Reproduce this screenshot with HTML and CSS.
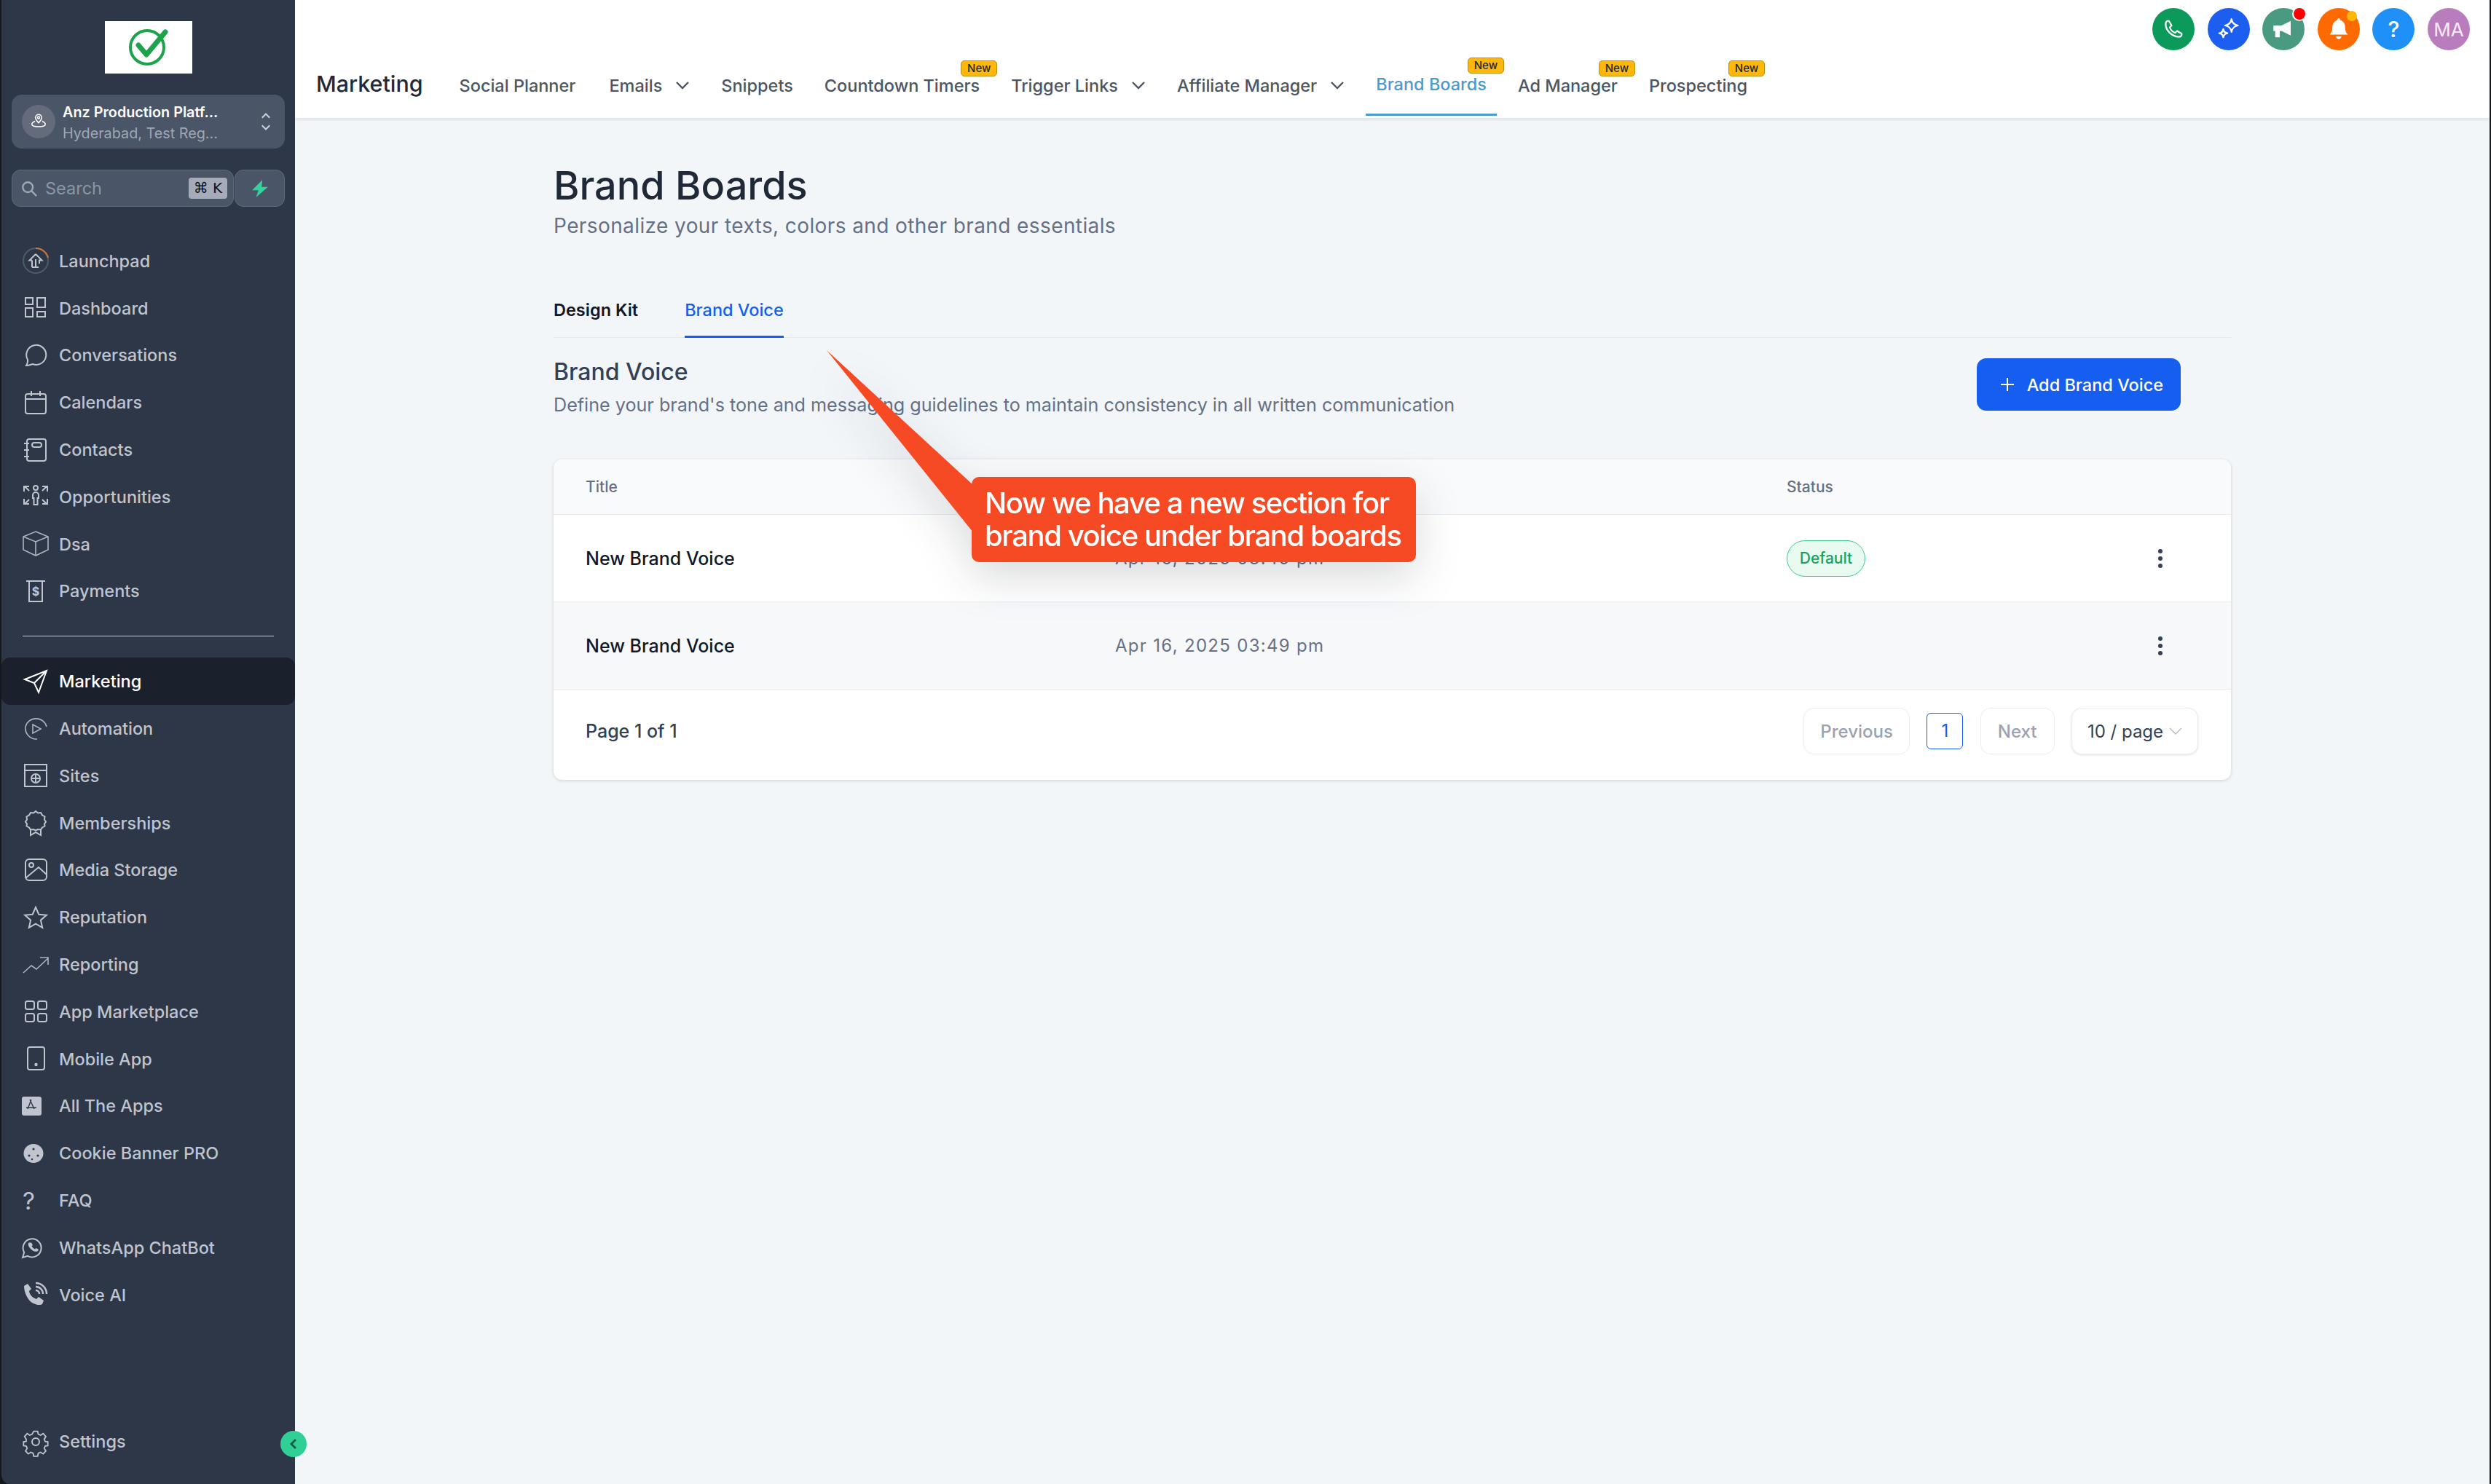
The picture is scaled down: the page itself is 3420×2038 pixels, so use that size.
FILE: index.html
```html
<!DOCTYPE html>
<html lang="en">
<head>
<meta charset="utf-8">
<title>Brand Boards</title>
<link rel="stylesheet" href="styles.css">
</head>
<body>
<aside class="sidebar">
  <div class="logo">
    <svg viewBox="0 0 120 72" class="logo-svg"><circle cx="58" cy="36" r="23" class="logo-ring"/><path d="M46 33l11 13 26-31" class="logo-check"/></svg>
  </div>
  <div class="switcher">
    <span class="sw-avatar"><svg viewBox="0 0 24 24" class="sw-pin"><path d="M12 13.500c-2.800-2.800-4-4.600-4-6.500a4 4 0 0 1 8 0c0 1.900-1.200 3.700-4 6.500z"/><circle cx="12" cy="7" r="1.400"/><path d="M7.500 11.500C5 12.500 3.500 14 3.500 15.500c0 2 3.500 3 8.500 3s8.500-1 8.500-3c0-1.500-1.500-3-4-4"/></svg></span>
    <span class="sw-text"><span class="sw-name">Anz Production Platf...</span><span class="sw-sub">Hyderabad, Test Reg...</span></span>
    <svg viewBox="0 0 16 32" class="sw-chev"><path d="M2 10l6-6 6 6M2 22l6 6 6-6"/></svg>
  </div>
  <div class="search-row">
    <div class="search">
      <svg viewBox="0 0 24 24" class="search-ico"><circle cx="10" cy="10" r="7.500"/><path d="M15.500 15.500L23 23"/></svg>
      <span class="search-text">Search</span>
      <span class="kbd">⌘ K</span>
    </div>
    <div class="flash"><svg viewBox="0 0 24 24" class="flash-ico"><path d="M15 1L2 14h8l-3 9 15-13h-8l1-9z"/></svg></div>
  </div>
  <nav class="menu menu-top">
    <a class="item"><svg viewBox="0 0 32 32" class="ni"><circle cx="16" cy="16" r="17" class="ring"/><path d="M16-1A17 17 0 0 1 33 12" class="ring-arc"/><path d="M16 7l8.500 8.500H21V20M16 7l-8.500 8.500H11M11 15.500V25M11 25h5M16 14v11M16 25h4"/></svg><span>Launchpad</span></a>
    <a class="item"><svg viewBox="0 0 32 32" class="ni"><rect x="2" y="2" width="10" height="9"/><rect x="2" y="16" width="10" height="12"/><rect x="18" y="2" width="11" height="13"/><rect x="18" y="21" width="11" height="7"/></svg><span>Dashboard</span></a>
    <a class="item"><svg viewBox="0 0 32 32" class="ni"><path d="M3 30c1.500-2.500 2.500-5 2-8A13.500 13.500 0 1 1 12 28c-2.500.5-5 2-9 2z"/></svg><span>Conversations</span></a>
    <a class="item"><svg viewBox="0 0 32 32" class="ni"><rect x="2" y="4" width="28" height="27" rx="3"/><path d="M2 11h28M10 0v7M22 0v7"/></svg><span>Calendars</span></a>
    <a class="item"><svg viewBox="0 0 32 32" class="ni"><rect x="4" y="1" width="26" height="30" rx="3"/><rect x="11" y="6" width="13" height="6" rx="3"/><path d="M0 7h7M0 16h7M0 25h7"/></svg><span>Contacts</span></a>
    <a class="item"><svg viewBox="0 0 32 32" class="ni"><circle cx="16" cy="4" r="3"/><path d="M12 14a4 4 0 0 1 8 0v4h-1.500v9h-5v-9H12zM0 9V2h7M1 2l6 6M32 9V2h-7M31 2l-6 6M0 19v7h7M1 26l6-6M32 19v7h-7M31 26l-6-6"/></svg><span>Opportunities</span></a>
    <a class="item"><svg viewBox="0 0 32 32" class="ni ni-thin"><path d="M16-1l17 7v18l-17 8-17-8V6zM-1 6l17 7 17-7M16 13v19"/></svg><span>Dsa</span></a>
    <a class="item"><svg viewBox="0 0 32 32" class="ni"><path d="M3 2h26M7 2v28h18V2"/><text x="16" y="22" class="dollar">$</text></svg><span>Payments</span></a>
  </nav>
  <hr class="divider">
  <nav class="menu">
    <a class="item active"><svg viewBox="0 0 32 32" class="ni"><path d="M1 13L31 1 20 31 14 18zM14 18L31 1"/></svg><span>Marketing</span></a>
    <a class="item"><svg viewBox="0 0 32 32" class="ni ni-thin"><path d="M31 13A15 15 0 0 0 2 13a15 15 0 0 0 16 17"/><path d="M12 10l11 6-11 6z"/></svg><span>Automation</span></a>
    <a class="item"><svg viewBox="0 0 32 32" class="ni"><rect x="1" y="1" width="30" height="30"/><path d="M1 9h30M10 20h12M16 14v12"/><circle cx="16" cy="20" r="6"/></svg><span>Sites</span></a>
    <a class="item"><svg viewBox="0 0 32 32" class="ni"><path d="M16 0l3 2.500 4-.5 2 3.500 3.500 2-.5 4 2 3-2 3 .5 3-3.500 2-2 3-4-.5-3 1.500-3-1.500-4 .5-2-3-3.500-2 .5-3-2-3 2-3-.5-4 3.500-2 2-3.500 4 .5z"/><path d="M9 24v9l7-4 7 4v-9"/></svg><span>Memberships</span></a>
    <a class="item"><svg viewBox="0 0 32 32" class="ni"><rect x="2" y="1" width="29" height="29" rx="5"/><circle cx="10" cy="9" r="3"/><path d="M2 27l18-15 11 10"/></svg><span>Media Storage</span></a>
    <a class="item"><svg viewBox="0 0 32 32" class="ni"><path d="M16 2l4.300 9.700 10.500 1-7.900 7 2.300 10.300L16 24.600 6.800 30l2.300-10.300-7.900-7 10.500-1z"/></svg><span>Reputation</span></a>
    <a class="item"><svg viewBox="0 0 32 32" class="ni ni-thin"><path d="M-1 27L10 17l7 5 16-15M22 6h11v10"/></svg><span>Reporting</span></a>
    <a class="item"><svg viewBox="0 0 32 32" class="ni"><rect x="2" y="2" width="12" height="11" rx="2.500"/><rect x="19" y="2" width="12" height="11" rx="2.500"/><rect x="2" y="19" width="12" height="11" rx="2.500"/><rect x="19" y="19" width="12" height="11" rx="2.500"/></svg><span>App Marketplace</span></a>
    <a class="item"><svg viewBox="0 0 32 32" class="ni"><rect x="5" y="0" width="23" height="31" rx="3"/><circle cx="16.500" cy="24" r="1.200"/></svg><span>Mobile App</span></a>
    <a class="item"><svg viewBox="0 0 32 32" class="ni"><rect x="-3" y="3" width="27" height="26" rx="3" class="solid"/><path d="M10 7l-5 13M8 7l6 13M3 18h14" class="cut"/></svg><span>All The Apps</span></a>
    <a class="item"><svg viewBox="0 0 32 32" class="ni"><ellipse cx="13" cy="16" rx="13.500" ry="13" class="solid"/><circle cx="13" cy="10" r="1.600" class="dot"/><circle cx="7" cy="19" r="1.600" class="dot"/><circle cx="19" cy="19" r="1.600" class="dot"/><circle cx="11" cy="24" r="1.200" class="dot"/></svg><span>Cookie Banner PRO</span></a>
    <a class="item"><span class="faq">?</span><span>FAQ</span></a>
    <a class="item"><svg viewBox="0 0 32 32" class="ni"><path d="M-2 30l2.200-7A12.500 12.500 0 1 1 5 27.800z"/><path d="M6 10c-1 3 1 6 3.500 8.500S15 22.500 18 21.500c1-.3 1.800-1.300 2-2.500l-3.500-2-1.500 1.500c-2-.8-3.500-2.500-4.500-4.500L12 13l-2-3.500c-1.500 0-3.500 0-4 .5z" class="solid"/></svg><span>WhatsApp ChatBot</span></a>
    <a class="item"><svg viewBox="0 0 32 32" class="ni"><path d="M0 4l5-3 5 7-3 3c.5 5 5 9.500 10 11l3-3 7 5-2 5c-3 2-8 1-12-1C6 25 0 14 0 4z" class="solid"/><path d="M16 10a5 5 0 0 1 5 5M16 5a10 10 0 0 1 10 10M16 0a15 15 0 0 1 15 15" class="signal"/></svg><span>Voice AI</span></a>
  </nav>
  <a class="item settings"><svg viewBox="0 0 32 32" class="ni"><circle cx="16" cy="16" r="5"/><path d="M13 0h6l1 4.500 3.500 1.500 4-2.500 4 4.500-2.500 4 1.500 3.500 4 .5v6l-4 .5-1.500 3.500 2.500 4-4 4.500-4-2.500-3.500 1.500-1 4.500h-6l-1-4.500-3.500-1.500-4 2.500-4-4.500 2.500-4-1.500-3.500-4-.5v-6l4-.5L1.500 12-1 8l4-4.500 4 2.500L10.500 4.500z" class="gear"/></svg><span>Settings</span></a>
  <button class="collapse"><svg viewBox="0 0 16 24" class="collapse-ico"><path d="M12 4l-8 8 8 8"/></svg></button>
</aside>

<main class="main">
  <header class="topbar">
    <div class="top-actions">
      <span class="circle c-phone"><svg viewBox="0 0 24 24" class="ci"><path d="M7 3l3 5-2 2c1 3 3 5 6 6l2-2 5 3c.5 2-1 3.500-3 3.500C10 20 3 13 3.500 6 3.500 4 5 2.500 7 3z"/></svg></span>
      <span class="circle c-spark"><svg viewBox="0 0 24 24" class="ci"><path d="M15 1c.5 4 2.500 6 7 7-4.500 1-6.500 3-7 7-.5-4-2.500-6-7-7 4.500-1 6.500-3 7-7zM6 12c.3 2.500 1.500 4 4.500 4.500C7.500 17 6.300 18.500 6 21c-.3-2.500-1.500-4-4.500-4.500C4.500 16 5.700 14.500 6 12z"/></svg></span>
      <span class="circle c-mega"><svg viewBox="0 0 24 24" class="ci-fill"><path d="M1 8h9l10-5v16l-10-5H8v7H3v-7H1z"/></svg><i class="dot-red"></i></span>
      <span class="circle c-bell"><svg viewBox="0 0 24 24" class="ci-fill"><path d="M12 0c1 0 1.500.7 1.500 2C17 3 19 6 19 10c0 4 1 6 3 8H2c2-2 3-4 3-8 0-4 2-7 5.500-8C10.500.7 11 0 12 0zM9 20h6c-.5 2-1.500 3-3 3s-2.500-1-3-3z"/></svg><i class="dot-amber"></i></span>
      <span class="circle c-help">?</span>
      <span class="circle c-user">MA</span>
    </div>
    <div class="navrow">
      <h2 class="app-title">Marketing</h2>
      <nav class="tabs-top">
        <a class="t t-first">Social Planner</a>
        <a class="t">Emails<svg viewBox="0 0 20 12" class="caret"><path d="M2 2l8 8 8-8"/></svg></a>
        <a class="t">Snippets</a>
        <a class="t">Countdown Timers<b class="new">New</b></a>
        <a class="t">Trigger Links<svg viewBox="0 0 20 12" class="caret"><path d="M2 2l8 8 8-8"/></svg></a>
        <a class="t">Affiliate Manager<svg viewBox="0 0 20 12" class="caret"><path d="M2 2l8 8 8-8"/></svg></a>
        <a class="t t-on">Brand Boards<b class="new">New</b></a>
        <a class="t">Ad Manager<b class="new">New</b></a>
        <a class="t">Prospecting<b class="new">New</b></a>
      </nav>
    </div>
  </header>

  <section class="page">
    <h1 class="title">Brand Boards</h1>
    <p class="subtitle">Personalize your texts, colors and other brand essentials</p>
    <div class="subtabs">
      <a class="st st-dark">Design Kit</a>
      <a class="st st-on">Brand Voice</a>
    </div>
    <div class="section-head">
      <div>
        <h3 class="section-title">Brand Voice</h3>
        <p class="section-desc">Define your brand's tone and messaging guidelines to maintain consistency in all written communication</p>
      </div>
      <button class="add"><svg viewBox="0 0 20 20" class="plus"><path d="M10 1v18M1 10h18"/></svg>Add Brand Voice</button>
    </div>
    <div class="card">
      <div class="row head"><span class="c1">Title</span><span class="c2"></span><span class="c3">Status</span></div>
      <div class="row">
        <span class="c1 name">New Brand Voice</span><span class="c2 date">Apr 16, 2025 03:49 pm</span>
        <span class="c3"><span class="pill">Default</span></span>
        <span class="more"><i></i><i></i><i></i></span>
      </div>
      <div class="row row-alt">
        <span class="c1 name">New Brand Voice</span><span class="c2 date">Apr 16, 2025 03:49 pm</span>
        <span class="c3"></span>
        <span class="more"><i></i><i></i><i></i></span>
      </div>
      <div class="foot">
        <span class="pageof">Page 1 of 1</span>
        <div class="pager">
          <span class="pg pg-prev">Previous</span>
          <span class="pg-num">1</span>
          <span class="pg pg-next">Next</span>
          <span class="pg pg-size">10 / page<svg viewBox="0 0 18 10" class="size-caret"><path d="M1 1l8 8 8-8"/></svg></span>
        </div>
      </div>
    </div>
  </section>

  <div class="callout">
    <svg viewBox="0 0 210 300" class="callout-tail"><path d="M0 0L201 185V250z"/></svg>
    <div class="callout-box">Now we have a new section for<br>brand voice under brand boards</div>
  </div>
</main>
</body>
</html>
```
FILE: styles.css
```css
* { box-sizing: border-box; }
html, body { margin: 0; height: 100%; }
body {
  display: flex;
  width: 3420px;
  height: 2038px;
  overflow: hidden;
  background: #14171c;
  font-family: Inter, "Liberation Sans", sans-serif;
  color: #101828;
}
h1, h2, h3, p { margin: 0; }

/* sidebar */
.sidebar {
  position: relative;
  flex: 0 0 403px;
  margin-left: 2px;
  display: flex;
  flex-direction: column;
  background: #2d3748;
  border-bottom-left-radius: 12px;
  z-index: 2;
}
.logo {
  width: 120px;
  height: 72px;
  margin: 29px auto 0;
  background: #fff;
}
.logo-svg { display: block; width: 120px; height: 72px; fill: none; stroke: #1ea34c; }
.logo-ring { stroke-width: 4; }
.logo-check { stroke-width: 7; stroke-linecap: round; stroke-linejoin: round; }

.switcher {
  display: flex;
  align-items: center;
  height: 74px;
  margin: 29px 14px 0 14px;
  padding: 0 19px 0 14px;
  border-radius: 14px;
  background: #4a5568;
}
.sw-avatar {
  flex: 0 0 46px;
  height: 46px;
  border-radius: 50%;
  background: #646c7c;
  display: flex;
  align-items: center;
  justify-content: center;
}
.sw-pin { width: 26px; height: 26px; fill: none; stroke: #fff; stroke-width: 1.400; }
.sw-text { flex: 1; display: flex; flex-direction: column; margin-left: 10px; padding-top: 4px; }
.sw-name { font-size: 19.800px; line-height: 29px; font-weight: 600; color: #fff; }
.sw-sub { font-size: 19.800px; line-height: 29px; color: #a0a7b4; }
.sw-chev { width: 14px; height: 28px; fill: none; stroke: #cbd0d9; stroke-width: 2.400; }

.search-row { display: flex; margin: 29px 14px 0 14px; height: 51px; gap: 1px; }
.search {
  flex: 1;
  display: flex;
  align-items: center;
  padding: 0 8px 0 12px;
  border: 1px solid #5f6979;
  border-radius: 12px;
  background: #4a5568;
}
.search-ico { width: 22px; height: 22px; fill: none; stroke: #a0a7b4; stroke-width: 2.600; }
.search-text { flex: 1; margin-left: 11px; font-size: 23.500px; color: #8d95a4; }
.kbd {
  width: 53px;
  height: 29px;
  border-radius: 4px;
  background: #a5abb9;
  color: #0c111d;
  font-size: 20px;
  line-height: 29px;
  text-align: center;
  white-space: nowrap;
  font-family: "DejaVu Sans", Inter, sans-serif;
}
.flash {
  flex: 0 0 69px;
  display: flex;
  align-items: center;
  justify-content: center;
  border: 1px solid #5f6979;
  border-radius: 12px;
  background: #4a5568;
}
.flash-ico { width: 26px; height: 26px; fill: #34d399; }

.menu { display: flex; flex-direction: column; }
.menu-top { margin-top: 42px; }
.item {
  display: flex;
  align-items: center;
  gap: 16px;
  height: 64.800px;
  padding-left: 31px;
  font-size: 23.500px;
  font-weight: 500;
  color: #bfc4cf;
}
.item.active { background: #1a202c; color: #fff; border-radius: 12px; }
.ni {
  flex: 0 0 32px;
  width: 32px;
  height: 32px;
  overflow: visible;
  fill: none;
  stroke: currentColor;
  stroke-width: 2;
}
.ni-thin { stroke-width: 1.600; stroke: #aeb3c0; }
.ring { stroke: #4f5968; stroke-width: 2; }
.ring-arc { stroke: #c9793c; stroke-width: 2; }
.solid { fill: currentColor; stroke: none; }
.cut { stroke: #2d3748; stroke-width: 1.400; }
.dot { fill: #2d3748; stroke: none; }
.signal { stroke-width: 2.400; }
.gear { stroke-width: 2; transform-origin: 16px 16px; transform: scale(.9); }
.dollar { font-size: 16px; font-weight: 700; fill: currentColor; stroke: none; text-anchor: middle; }
.faq { flex: 0 0 32px; font-size: 33px; font-weight: 400; line-height: 32px; margin-left: -2px; margin-right: 2px; }
.divider { width: 345px; height: 1px; margin: 29px 0 29px 29px; border: 0; background: #c7ccd6; }
.settings { margin-top: auto; margin-bottom: 26px; }
.collapse {
  position: absolute;
  right: -16px;
  bottom: 37px;
  width: 36px;
  height: 36px;
  padding: 0;
  border: 0;
  border-radius: 50%;
  background: #2fcf96;
  display: flex;
  align-items: center;
  justify-content: center;
}
.collapse-ico { width: 12px; height: 18px; fill: none; stroke: #0e5a4a; stroke-width: 3.600; }

/* main */
.main {
  position: relative;
  flex: 1;
  display: flex;
  flex-direction: column;
  margin-right: 2px;
  background: #f2f6f9;
}
.topbar {
  height: 162px;
  background: #fff;
  box-shadow: 0 1px 5px rgba(16, 24, 40, .14);
}
.top-actions {
  display: flex;
  justify-content: flex-end;
  gap: 17.600px;
  height: 69px;
  padding: 11px 27px 0 0;
}
.circle {
  position: relative;
  width: 58px;
  height: 58px;
  border-radius: 50%;
  display: flex;
  align-items: center;
  justify-content: center;
  color: #fff;
}
.c-phone { background: #0b9a5a; }
.c-spark { background: #1c5ff0; }
.c-mega { background: #4a9a82; }
.c-bell { background: #ff6a00; }
.c-help { background: #1e90f8; font-size: 30px; font-weight: 500; }
.c-user { background: #b97dbd; font-size: 26px; color: #f7eaf8; font-weight: 400; }
.ci { width: 30px; height: 30px; fill: none; stroke: #fff; stroke-width: 1.800; stroke-linejoin: round; }
.ci-fill { width: 30px; height: 30px; fill: #fff; }
.dot-red, .dot-amber {
  position: absolute;
  border-radius: 50%;
}
.dot-red { top: -2px; right: -3px; background: #f00; border: 2px solid #fff; width: 20px; height: 20px; }
.dot-amber { top: 4px; right: 4px; width: 14px; height: 14px; background: #ffb703; }

.navrow { display: flex; align-items: center; height: 93px; padding-left: 29px; padding-top: 3px; position: relative; }
.app-title { font-size: 30.400px; font-weight: 500; color: #1f2937; margin: -4px 50px 0 0; white-space: nowrap; }
.tabs-top { display: flex; gap: 43px; }
.t {
  position: relative;
  display: flex;
  align-items: center;
  font-size: 23.500px;
  font-weight: 500;
  color: #4b5563;
  white-space: nowrap;
}
.t-first { margin-right: 3px; }
.caret { width: 20px; height: 12px; margin-left: 18px; fill: none; stroke: #4b5563; stroke-width: 2.400; }
.t-on { color: #4a9bd0; margin-top: -4px; }
.t-on::after {
  content: "";
  position: absolute;
  left: -14px;
  right: -14px;
  bottom: -27px;
  height: 3px;
  background: #4a9bd0;
}
.new {
  position: absolute;
  right: -24px;
  top: -20px;
  width: 50px;
  height: 22px;
  border: 1px solid #b98f10;
  border-radius: 5px;
  background: #ffb80a;
  color: #1f2937;
  font-size: 15px;
  font-weight: 500;
  line-height: 20px;
  text-align: center;
}

.page { width: 2303px; margin-left: 355px; padding-top: 61px; }
.title { font-size: 54px; line-height: 64px; font-weight: 500; color: #1f2937; }
.subtitle { margin-top: 5px; font-size: 28px; line-height: 36px; color: #667085; letter-spacing: .4px; }
.subtabs { display: flex; gap: 64px; height: 73px; margin-top: 63px; border-bottom: 1px solid #e6eaef; }
.st { height: 73px; padding-top: 20px; font-size: 23.500px; line-height: 30px; font-weight: 600; }
.st-dark { color: #101828; }
.st-on { color: #155eef; font-weight: 500; border-bottom: 3px solid #155eef; }
.section-head { display: flex; justify-content: space-between; padding-right: 69px; margin-top: 27px; height: 140px; }
.section-title { font-size: 32px; line-height: 40px; font-weight: 500; color: #344054; }
.section-desc { margin-top: 7px; font-size: 25.150px; line-height: 36px; color: #667085; }
.add {
  display: flex;
  align-items: center;
  height: 72px;
  margin-top: 1px;
  padding: 0 24px 0 32px;
  border: 0;
  border-radius: 13px;
  background: #155eef;
  color: #fff;
  font: 500 23.500px Inter, sans-serif;
}
.plus { width: 20px; height: 20px; margin-right: 17px; fill: none; stroke: #fff; stroke-width: 2; }

.card {
  width: 2303px;
  border-radius: 12px;
  background: #fff;
  box-shadow: 0 1px 4px rgba(16, 24, 40, .16);
  overflow: hidden;
}
.row {
  display: flex;
  align-items: center;
  position: relative;
  height: 120px;
  padding-left: 44px;
  border-bottom: 1px solid #eaecf0;
  font-size: 24px;
}
.head { height: 76px; background: #f9fafb; font-size: 21px; font-weight: 500; color: #667085; }
.row-alt { background: #f7f8fa; }
.c1 { flex: 0 0 727px; }
.c2 { flex: 0 0 922px; }
.c3 { flex: 0 0 auto; }
.name { font-size: 25px; font-weight: 500; color: #101828; }
.date { color: #667085; letter-spacing: 1.300px; }
.pill {
  display: block;
  width: 108px;
  height: 50px;
  border: 1px solid #38c98b;
  border-radius: 25px;
  background: #e9fbf1;
  color: #17a35e;
  font-size: 21px;
  font-weight: 500;
  line-height: 48px;
  text-align: center;
}
.more {
  position: absolute;
  left: 2203px;
  display: flex;
  flex-direction: column;
  gap: 4px;
}
.more i { width: 6px; height: 6px; border-radius: 50%; background: #344054; }
.foot { display: flex; align-items: center; justify-content: space-between; height: 124px; padding: 0 45px 10px 44px; }
.pageof { font-size: 25px; font-weight: 500; color: #344054; }
.pager { display: flex; align-items: center; gap: 23.300px; }
.pg {
  display: flex;
  align-items: center;
  justify-content: center;
  height: 64px;
  border: 1px solid #eaecf0;
  border-radius: 14px;
  background: #fff;
  font-size: 24px;
  font-weight: 500;
  color: #98a2b3;
}
.pg-prev { width: 146px; }
.pg-next { width: 102px; }
.pg-num {
  width: 50px;
  height: 50px;
  border: 1px solid #155eef;
  border-radius: 6px;
  color: #155eef;
  font-size: 24px;
  line-height: 48px;
  text-align: center;
}
.pg-size { width: 174px; color: #344054; font-weight: 400; box-shadow: 0 1px 3px rgba(16, 24, 40, .12); }
.size-caret { width: 18px; height: 10px; margin-left: 8px; fill: none; stroke: #b5bac4; stroke-width: 1.400; }

/* annotation */
.callout {
  position: absolute;
  left: 730px;
  top: 481px;
  width: 809px;
  height: 291px;
  filter: drop-shadow(0 20px 30px rgba(16, 24, 40, .16));
}
.callout-tail { position: absolute; left: 0; top: 0; width: 210px; height: 300px; fill: #f54a24; }
.callout-box {
  position: absolute;
  left: 199px;
  top: 174px;
  width: 610px;
  height: 117px;
  padding: 13px 0 0 18px;
  border-radius: 10px;
  background: #f54a24;
  color: #fff;
  font-size: 40px;
  font-weight: 500;
  line-height: 45px;
  letter-spacing: -1.400px;
  white-space: nowrap;
}
```
